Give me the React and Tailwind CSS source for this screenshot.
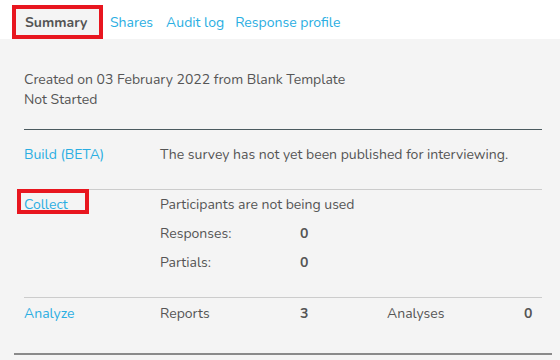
export default function App() {
  const font = { fontFamily: '"Nunito", "Lato", "Noto Sans", sans-serif' };
  return (
    <div className="w-[560px] h-[360px] overflow-hidden bg-[#f4f4f4] text-[14px] leading-[20px] text-[#555555]" style={font}>
      <div className="h-[39px] bg-white flex items-end pl-[12px]">
        <div className="h-[34px] w-[91px] border-4 border-[#e8161f] bg-[#f4f4f4] flex items-center pl-[9px] pt-[1px] font-bold text-[#555555]">
          Summary
        </div>
        <div className="h-[34px] pt-[1px] flex items-center text-[#2aaee2]">
          <span className="ml-[7px]">Shares</span>
          <span className="ml-[13px]">Audit log</span>
          <span className="ml-[11px]">Response profile</span>
        </div>
      </div>
      <div className="pl-[24px] pr-[18px]">
        <div className="pt-[31px] pb-[19px] border-b border-[#4b5a5f]">
          <div>Created on 03 February 2022 from Blank Template</div>
          <div>Not Started</div>
        </div>
        <div className="flex pt-[15px] pb-[24px] border-b border-[#cccccc]">
          <div className="w-[136px] text-[#2aaee2]">Build (BETA)</div>
          <div>The survey has not yet been published for interviewing.</div>
        </div>
        <div className="flex pt-[5px] pb-[24px] border-b border-[#cccccc]">
          <div className="w-[136px] text-[#2aaee2]">
            <span className="relative">
              Collect
              <span className="absolute left-[-7px] top-[-6px] w-[72px] h-[25px] border-4 border-[#e8161f]"></span>
            </span>
          </div>
          <div className="flex flex-col gap-[9px]">
            <div>Participants are not being used</div>
            <div className="flex">
              <div className="w-[140px]">Responses:</div>
              <div className="font-bold">0</div>
            </div>
            <div className="flex">
              <div className="w-[140px]">Partials:</div>
              <div className="font-bold">0</div>
            </div>
          </div>
        </div>
        <div className="flex pt-[6px] pb-[29px]">
          <div className="w-[136px] text-[#2aaee2]">Analyze</div>
          <div className="w-[140px]">Reports</div>
          <div className="w-[87px] font-bold">3</div>
          <div className="w-[137px]">Analyses</div>
          <div className="font-bold">0</div>
        </div>
      </div>
      <div className="ml-[14px] w-[538px] h-[2px] bg-[#8a8a8a]"></div>
    </div>
  );
}
